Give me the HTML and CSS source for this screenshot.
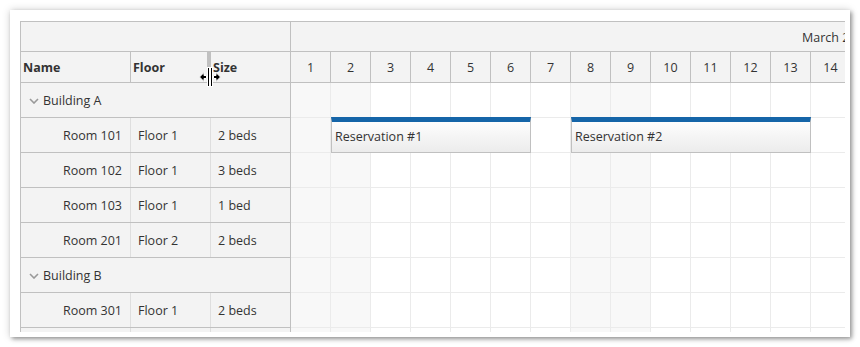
FILE: index.html
```html
<!DOCTYPE html>
<html lang="en">

<head>
    <meta charset="UTF-8">
    <title>Scheduler</title>
    <link rel="stylesheet" href="styles.css">
</head>

<body>
    <div class="frame">
        <div class="scheduler">
            <div class="rows-pane">
                <div class="corner"></div>
                <div class="col-heads">
                    <div class="c-name">Name</div>
                    <div class="c-floor">Floor</div>
                    <div class="c-size">Size</div>
                </div>
                <div class="group-row">
                    <svg class="chevron" width="10" height="6" viewBox="0 0 10 6"><polyline points="1,1 5,5 9,1" /></svg>
                    Building A
                </div>
                <div class="res-row">
                    <div class="c-name">Room 101</div>
                    <div class="c-floor">Floor 1</div>
                    <div class="c-size">2 beds</div>
                </div>
                <div class="res-row">
                    <div class="c-name">Room 102</div>
                    <div class="c-floor">Floor 1</div>
                    <div class="c-size">3 beds</div>
                </div>
                <div class="res-row">
                    <div class="c-name">Room 103</div>
                    <div class="c-floor">Floor 1</div>
                    <div class="c-size">1 bed</div>
                </div>
                <div class="res-row">
                    <div class="c-name">Room 201</div>
                    <div class="c-floor">Floor 2</div>
                    <div class="c-size">2 beds</div>
                </div>
                <div class="group-row">
                    <svg class="chevron" width="10" height="6" viewBox="0 0 10 6"><polyline points="1,1 5,5 9,1" /></svg>
                    Building B
                </div>
                <div class="res-row">
                    <div class="c-name">Room 301</div>
                    <div class="c-floor">Floor 1</div>
                    <div class="c-size">2 beds</div>
                </div>
                <!-- next row only peeks in at the bottom edge -->
                <div class="res-row">
                    <div class="c-name"></div>
                    <div class="c-floor"></div>
                    <div class="c-size"></div>
                </div>
            </div>

            <div class="timeline">
                <div class="month-head"><span>March 2024</span></div>
                <div class="day-heads">
                    <div>1</div><div>2</div><div>3</div><div>4</div><div>5</div><div>6</div><div>7</div>
                    <div>8</div><div>9</div><div>10</div><div>11</div><div>12</div><div>13</div><div>14</div>
                    <div></div><div></div><div></div><div></div><div></div><div></div><div></div>
                </div>
                <div class="grid">
                    <div class="event" style="left: 40px; width: 200px;">Reservation #1</div>
                    <div class="event" style="left: 280px; width: 240px;">Reservation #2</div>
                </div>
            </div>
        </div>

        <!-- column resize handle + mouse cursor -->
        <div class="splitter"></div>
        <svg class="cursor" width="22" height="20" viewBox="0 0 22 20">
            <g fill="#000" stroke="#fff" stroke-width="1">
                <polygon points="0.5,10 5,5.5 5,8.5 7.5,8.5 7.5,11.5 5,11.5 5,14.5" />
                <polygon points="21.5,10 17,5.5 17,8.5 14.5,8.5 14.5,11.5 17,11.5 17,14.5" />
                <rect x="8.5" y="0.5" width="2" height="19" />
                <rect x="11.5" y="0.5" width="2" height="19" />
            </g>
        </svg>
    </div>
</body>

</html>
```

FILE: styles.css
```css
* {
    margin: 0;
    padding: 0;
    box-sizing: border-box;
}

body {
    background: #fff;
    font-family: "Open Sans", "Noto Sans", sans-serif;
    font-size: 12.5px;
    color: #333;
}

.frame {
    position: relative;
    margin: 10px;
    width: 840px;
    height: 327px;
    background: #fff;
    box-shadow: 2px 2px 4px rgba(0, 0, 0, 0.35), 0 0 8px rgba(0, 0, 0, 0.18);
    padding: 11px 5px 5px 10px;
}

.scheduler {
    display: flex;
    width: 825px;
    height: 311px;
    overflow: hidden;
    border-top: 1px solid #c0c0c0;
    border-left: 1px solid #c0c0c0;
}

/* left side: resource list */
.rows-pane {
    flex: none;
    width: 270px;
    border-right: 1px solid #c0c0c0;
    background: #f3f3f3;
}

.corner {
    height: 30px;
    border-bottom: 1px solid #c0c0c0;
}

.col-heads,
.res-row {
    display: grid;
    grid-template-columns: 110px 80px 79px;
    border-bottom: 1px solid #c0c0c0;
}

.col-heads {
    height: 31px;
    font-weight: 700;
}

.col-heads>div {
    padding: 1px 0 0 2px;
    line-height: 29px;
    border-right: 1px solid #c0c0c0;
}

.col-heads>div:last-child,
.res-row>div:last-child {
    border-right: 0;
}

.res-row {
    height: 35px;
}

.res-row>div {
    line-height: 33px;
    padding: 1px 0 0 7px;
    border-right: 1px solid #dedede;
}

.res-row>.c-name {
    text-align: right;
    padding: 1px 8px 0 0;
}

.group-row {
    height: 35px;
    line-height: 33px;
    border-bottom: 1px solid #c0c0c0;
    padding: 1px 0 0 8px;
    display: flex;
    align-items: center;
    gap: 4px;
}

.chevron {
    fill: none;
    stroke: #999;
    stroke-width: 1.6;
}

/* right side: time grid */
.timeline {
    flex: none;
    width: 840px;
}

.month-head {
    height: 30px;
    padding: 2px 0 0 511px;
    line-height: 27px;
    background: #f3f3f3;
    border-bottom: 1px solid #c0c0c0;
    white-space: nowrap;
}

.day-heads {
    display: flex;
    height: 31px;
    background: #f3f3f3;
    border-bottom: 1px solid #c0c0c0;
}

.day-heads>div {
    flex: none;
    width: 40px;
    padding-top: 1px;
    line-height: 29px;
    text-align: center;
    border-right: 1px solid #c0c0c0;
}

.grid {
    position: relative;
    height: 280px;
    background:
        linear-gradient(to bottom, transparent 34px, #ebebeb 34px) 0 0 / 100% 35px,
        linear-gradient(to right, transparent 39px, #ebebeb 39px) 0 0 / 40px 100%,
        linear-gradient(to right, #f8f8f8 80px, #fff 80px) 0 0 / 280px 100%;
}

.event {
    position: absolute;
    top: 34px;
    height: 36px;
    padding-left: 3px;
    line-height: 29px;
    white-space: nowrap;
    border: 1px solid #c0c0c0;
    border-top: 5px solid #1565a8;
    background: linear-gradient(to bottom, #fdfdfd, #ececec);
}

.splitter {
    position: absolute;
    left: 197px;
    top: 42px;
    width: 3px;
    height: 30px;
    background: #c0c0c0;
}

.cursor {
    position: absolute;
    left: 189px;
    top: 57px;
}
```
